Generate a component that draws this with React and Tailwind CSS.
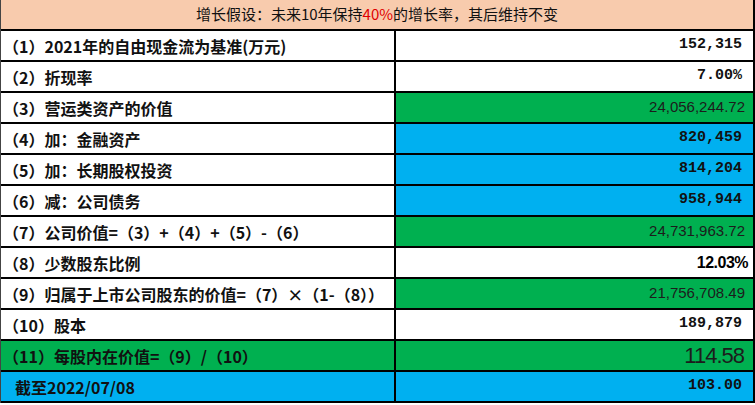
const rows = [
  { label: '（1）2021年的自由现金流为基准(万元)', value: '152,315', kind: 'mono', bg: 'bg-white' },
  { label: '（2）折现率', value: '7.00%', kind: 'mono', bg: 'bg-white' },
  { label: '（3）营运类资产的价值', value: '24,056,244.72', kind: 'sans', bg: 'bg-[#00b050]' },
  { label: '（4）加：金融资产', value: '820,459', kind: 'mono', bg: 'bg-[#00b0f0]' },
  { label: '（5）加：长期股权投资', value: '814,204', kind: 'mono', bg: 'bg-[#00b0f0]' },
  { label: '（6）减：公司债务', value: '958,944', kind: 'mono', bg: 'bg-[#00b0f0]' },
  { label: '（7）公司价值=（3）+（4）+（5）-（6）', value: '24,731,963.72', kind: 'sans', bg: 'bg-[#00b050]' },
  { label: '（8）少数股东比例', value: '12.03%', kind: 'bold', bg: 'bg-white' },
  { label: '（9）归属于上市公司股东的价值=（7）×（1-（8））', value: '21,756,708.49', kind: 'sans', bg: 'bg-[#00b050]' },
  { label: '（10）股本', value: '189,879', kind: 'mono', bg: 'bg-white' },
  { label: '（11）每股内在价值=（9）/（10）', value: '114.58', kind: 'big', bg: 'bg-[#00b050]', leftBg: 'bg-[#00b050]' },
  { label: '截至2022/07/08', value: '103.00', kind: 'mono', bg: 'bg-[#00b0f0]', leftBg: 'bg-[#00b0f0]', indent: true },
];

const valueStyles = {
  mono: "pr-[11px] font-['Liberation_Mono',monospace] font-bold text-[15px] text-[#111]",
  sans: "pr-[8px] font-['Liberation_Sans',sans-serif] text-[15px] text-[#1c1c1c]",
  bold: "pr-[5px] font-['Liberation_Sans',sans-serif] font-bold text-[16px] tracking-[-0.5px] text-black",
  big: "pr-[9px] font-['Liberation_Sans',sans-serif] text-[22px] tracking-[-1px] text-[#1c1c1c]",
};

export default function App() {
  return (
    <div className="w-[755px] h-[405px] bg-white overflow-hidden">
      <div className="border-l border-l-[#444] border-r-2 border-r-black">
        <div className="h-[31px] bg-[#f8cbad] border-b-2 border-black flex items-center justify-center font-['Noto_Sans_CJK_SC',sans-serif] text-[15px] text-[#111]">
          增长假设：未来10年保持<span className="text-[#e00000]">40%</span>的增长率，其后维持不变
        </div>
        {rows.map((r, i) => (
          <div key={i} className="h-[31px] flex border-b-2 border-black">
            <div className={`w-[395px] shrink-0 border-r-2 border-black flex items-center font-['Noto_Sans_CJK_SC',sans-serif] font-bold text-[16px] text-[#111] ${r.leftBg || 'bg-white'} ${r.indent ? 'pl-[14px]' : 'pl-[2px]'}`}>
              {r.label}
            </div>
            <div className={`flex-1 flex items-center justify-end ${r.bg} ${valueStyles[r.kind]}`}>
              {r.value}
            </div>
          </div>
        ))}
      </div>
    </div>
  );
}
